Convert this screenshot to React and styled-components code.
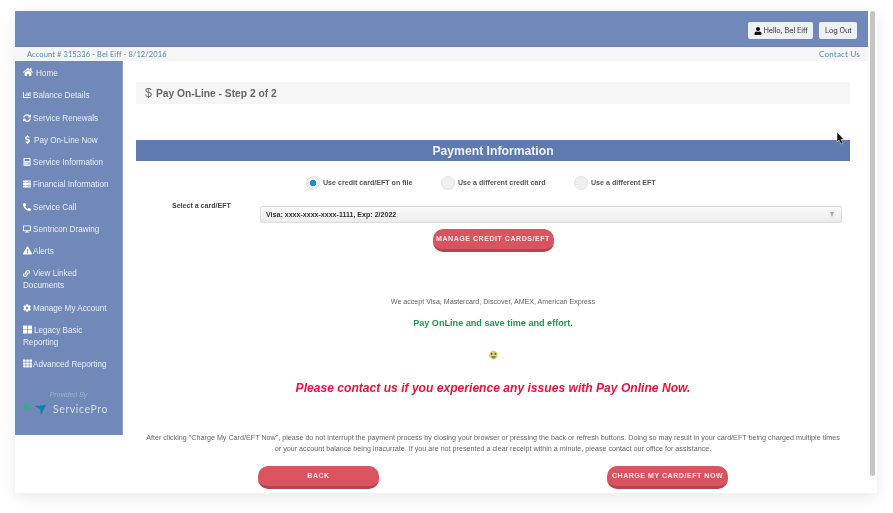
import React from 'react'
import styled, { createGlobalStyle } from 'styled-components'
import {
  FaHome, FaChartBar, FaSyncAlt, FaDollarSign, FaCalculator, FaServer, FaPhoneAlt,
  FaDesktop, FaExclamationTriangle, FaLink, FaCog, FaThLarge, FaTh, FaUser,
} from 'react-icons/fa'

const GlobalStyle = createGlobalStyle`
  html, body {
    margin: 0;
    padding: 0;
    background: #fff;
    font-family: "Liberation Sans", Arial, sans-serif;
    overflow: hidden;
  }
`

const Page = styled.div`
  width: 893px;
  height: 513px;
  padding: 11px 0 0 15px;
  box-sizing: border-box;
  background: #fff;
`
const Window = styled.div`
  position: relative;
  display: flex;
  width: 862px;
  height: 482px;
  background: #fff;
  box-shadow: 0 4px 14px rgba(0, 0, 0, 0.09);
  overflow: hidden;
  filter: blur(0.35px);
`
const Main = styled.div`
  width: 853px;
  display: flex;
  flex-direction: column;
`
const ScrollTrack = styled.div`
  flex: 1;
  padding: 0 2px 0 2px;
`
const ScrollThumb = styled.div`
  height: 465px;
  width: 5px;
  border-radius: 3px;
  background: #c4c4c4;
`
const Header = styled.header`
  height: 36px;
  flex: none;
  box-sizing: border-box;
  background: #7189b8;
  border-bottom: 1px solid #6a82b2;
  display: flex;
  justify-content: flex-end;
  align-items: flex-start;
  gap: 6px;
  padding: 11px 11px 0 0;
`
const HeaderButton = styled.div`
  height: 17px;
  box-sizing: border-box;
  padding: 0 5.5px;
  display: flex;
  align-items: center;
  gap: 2px;
  background: #eef0f6;
  border-radius: 2px;
  color: #333;
  font-size: 7.3px;
  font-family: "Inter", "Liberation Sans", sans-serif;
  letter-spacing: -0.1px;
  white-space: nowrap;
`
const AccountBar = styled.div`
  height: 14px;
  flex: none;
  background: #f5f5f5;
  display: flex;
  justify-content: space-between;
  align-items: center;
  padding: 0 8px 0 12px;
  font-size: 7.5px;
  color: #4f8ea6;
  font-family: "Lato", "Liberation Sans", sans-serif;
  letter-spacing: 0.1px;
`
const ContactLink = styled.span`
  font-size: 8px;
  letter-spacing: 0.2px;
`
const Body = styled.div`
  display: flex;
  align-items: flex-start;
  flex: 1;
`
const Sidebar = styled.nav`
  width: 108px;
  height: 374px;
  flex: none;
  box-sizing: border-box;
  background: #7189b8;
  border-right: 1px solid #8a9ec6;
  padding-top: 1px;
`
const NavItem = styled.div`
  padding: 5px 6px 5.27px 8px;
  font-size: 8.15px;
  line-height: 12px;
  color: #e9edf5;
  svg {
    display: inline-block;
    vertical-align: -1px;
    margin-right: ${(p) => p.$gap || 1}px;
    color: #fff;
  }
`
const Provided = styled.div`
  margin-top: 15px;
  text-align: center;
  font-size: 7px;
  font-style: italic;
  color: #9fb0d2;
`
const LogoRow = styled.div`
  margin-top: 3px;
  padding-left: 7px;
  display: flex;
  align-items: center;
  gap: 7px;
  color: #d5dcec;
  font-family: "Lato", "Liberation Sans", sans-serif;
  font-size: 10.5px;
  letter-spacing: 0.6px;
`
const Content = styled.main`
  flex: 1;
  padding: 21px 18px 0 13px;
`
const TitleBar = styled.div`
  height: 22px;
  background: #f5f5f5;
  display: flex;
  align-items: center;
  padding-left: 9px;
  gap: 4px;
  font-size: 10.25px;
  font-weight: bold;
  color: #666;
`
const DollarMark = styled.span`
  font-size: 12.5px;
  font-weight: normal;
`
const SectionHead = styled.div`
  margin-top: 36px;
  height: 21px;
  background: #5f7aae;
  color: #f1f3f8;
  font-size: 12.2px;
  font-weight: bold;
  line-height: 22px;
  text-align: center;
`
const RadioRow = styled.div`
  margin-top: 15px;
  height: 14px;
  display: flex;
  align-items: center;
  padding-left: 170px;
`
const RadioOption = styled.label`
  display: flex;
  align-items: center;
  gap: 3px;
  width: ${(p) => p.$w}px;
  font-size: 7.1px;
  line-height: 15px;
  font-weight: bold;
  color: #555;
  white-space: nowrap;
`
const RadioDot = styled.span`
  width: 14px;
  height: 14px;
  flex: none;
  box-sizing: border-box;
  border-radius: 50%;
  border: 1px solid #e3e3e3;
  background: ${(p) => (p.$on ? 'radial-gradient(circle, #1f8fc4 0 3px, #eef1f4 3.6px)' : '#f0f0f0')};
`
const SelectRow = styled.div`
  margin-top: 16px;
  display: flex;
  align-items: flex-start;
  padding-right: 8px;
`
const SelectLabel = styled.div`
  width: 124px;
  flex: none;
  box-sizing: border-box;
  padding-left: 36px;
  margin-top: -5px;
  font-size: 7.05px;
  font-weight: bold;
  color: #444;
  line-height: 10px;
`
const SelectBox = styled.div`
  flex: 1;
  height: 17px;
  box-sizing: border-box;
  display: flex;
  justify-content: space-between;
  align-items: center;
  padding: 0 7px 0 5px;
  border: 1px solid #dcdcdc;
  border-radius: 2px;
  background: linear-gradient(#fafafa, #ececec);
  font-size: 7.07px;
  font-weight: bold;
  color: #333;
`
const Caret = styled.span`
  width: 0;
  height: 0;
  border-left: 2.5px solid transparent;
  border-right: 2.5px solid transparent;
  border-top: 5px solid #a8a8a8;
`
const Centered = styled.div`
  display: flex;
  justify-content: center;
  margin-top: ${(p) => p.$top || 0}px;
`
const PillButton = styled.div`
  width: 121px;
  height: 23px;
  box-sizing: border-box;
  display: flex;
  justify-content: center;
  align-items: center;
  padding-bottom: 2px;
  border-radius: 10px;
  background: #d9545e;
  border-bottom: 3px solid #b24650;
  color: #f8e8e8;
  font-size: 7px;
  font-weight: bold;
  letter-spacing: 0.55px;
  white-space: nowrap;
`
const AcceptText = styled.div`
  margin-top: 45px;
  text-align: center;
  font-size: 7.1px;
  line-height: 10px;
  color: #666;
`
const PromoText = styled.div`
  margin-top: 10px;
  text-align: center;
  font-size: 9.1px;
  line-height: 12px;
  font-weight: bold;
  color: #1f9650;
`
const Emoji = styled.svg`
  display: block;
  margin: 21px auto 0;
`
const AlertText = styled.div`
  margin-top: 20px;
  text-align: center;
  font-size: 12.1px;
  line-height: 16px;
  font-weight: bold;
  font-style: italic;
  color: #e3143a;
`
const Notice = styled.div`
  margin-top: 37px;
  text-align: center;
  font-size: 7.18px;
  line-height: 11px;
  color: #666;
  white-space: nowrap;
`
const ActionRow = styled.div`
  margin-top: 11px;
  display: flex;
  padding-left: 122px;
  gap: 228px;
`
const Cursor = styled.svg`
  position: absolute;
  left: 821px;
  top: 121px;
`

const navItems = [
  { icon: FaHome, size: 10, text: 'Home', gap: 3 },
  { icon: FaChartBar, size: 8, text: 'Balance Details', gap: 2 },
  { icon: FaSyncAlt, size: 8, text: 'Service Renewals', gap: 2 },
  { icon: FaDollarSign, size: 9, text: 'Pay On-Line Now', gap: 2 },
  { icon: FaCalculator, size: 8, text: 'Service Information', gap: 2 },
  { icon: FaServer, size: 8, text: 'Financial Information', gap: 2 },
  { icon: FaPhoneAlt, size: 8, text: 'Service Call', gap: 2 },
  { icon: FaDesktop, size: 8, text: 'Sentricon Drawing', gap: 2 },
  { icon: FaExclamationTriangle, size: 9, text: 'Alerts' },
  { icon: FaLink, size: 7, text: 'View Linked Documents', gap: 3 },
  { icon: FaCog, size: 8, text: 'Manage My Account', gap: 2 },
  { icon: FaThLarge, size: 9, text: 'Legacy Basic Reporting', gap: 2 },
  { icon: FaTh, size: 9, text: 'Advanced Reporting' },
]

const Logo = () => (
  <svg width="24" height="15" viewBox="0 0 24 15">
    <path d="M1 9 L5 1 L6 6 L11 9 Z" fill="#2fb56f" />
    <path d="M12 5 L24 4 L19 14 L18 8 Z" fill="#1582ad" />
  </svg>
)

const MoneyFace = () => (
  <Emoji width="9" height="10" viewBox="0 0 9 10">
    <circle cx="4.5" cy="5" r="4.4" fill="#e8d272" />
    <rect x="1.8" y="2.8" width="1.6" height="2" fill="#4f6a3a" />
    <rect x="5.6" y="2.8" width="1.6" height="2" fill="#4f6a3a" />
    <path d="M2 6.2 H7 Q6.5 8.6 4.5 8.6 Q2.5 8.6 2 6.2 Z" fill="#3f9a55" />
  </Emoji>
)

const App = () => (
  <Page>
    <GlobalStyle />
    <Window>
      <Main>
        <Header>
          <HeaderButton>
            <FaUser size={8} color="#111" />
            Hello, Bel Eiff
          </HeaderButton>
          <HeaderButton>Log Out</HeaderButton>
        </Header>
        <AccountBar>
          <span>Account # 315336 - Bel Eiff - 8/12/2016</span>
          <ContactLink>Contact Us</ContactLink>
        </AccountBar>
        <Body>
          <Sidebar>
            {navItems.map((item) => (
              <NavItem key={item.text} $gap={item.gap}>
                <item.icon size={item.size} />
                {item.text}
              </NavItem>
            ))}
            <Provided>Provided By</Provided>
            <LogoRow>
              <Logo />
              ServicePro
            </LogoRow>
          </Sidebar>
          <Content>
            <TitleBar>
              <DollarMark>$</DollarMark>
              Pay On-Line - Step 2 of 2
            </TitleBar>
            <SectionHead>Payment Information</SectionHead>
            <RadioRow>
              <RadioOption $w={135}>
                <RadioDot $on />
                Use credit card/EFT on file
              </RadioOption>
              <RadioOption $w={133}>
                <RadioDot />
                Use a different credit card
              </RadioOption>
              <RadioOption $w={100}>
                <RadioDot />
                Use a different EFT
              </RadioOption>
            </RadioRow>
            <SelectRow>
              <SelectLabel>Select a card/EFT</SelectLabel>
              <SelectBox>
                Visa: xxxx-xxxx-xxxx-1111, Exp: 2/2022
                <Caret />
              </SelectBox>
            </SelectRow>
            <Centered $top={6}>
              <PillButton>MANAGE CREDIT CARDS/EFT</PillButton>
            </Centered>
            <AcceptText>We accept Visa, Mastercard, Discover, AMEX, American Express</AcceptText>
            <PromoText>Pay OnLine and save time and effort.</PromoText>
            <MoneyFace />
            <AlertText>Please contact us if you experience any issues with Pay Online Now.</AlertText>
            <Notice>
              After clicking "Charge My Card/EFT Now", please do not interrupt the payment process by closing your browser or pressing the back or refresh buttons. Doing so may result in your card/EFT being charged multiple times
              <br />
              or your account balance being inacurrate. If you are not presented a clear receipt within a minute, please contact our office for assistance.
            </Notice>
            <ActionRow>
              <PillButton>BACK</PillButton>
              <PillButton>CHARGE MY CARD/EFT NOW</PillButton>
            </ActionRow>
          </Content>
        </Body>
      </Main>
      <ScrollTrack>
        <ScrollThumb />
      </ScrollTrack>
      <Cursor width="9" height="13" viewBox="0 0 9 13">
        <path d="M1 0 V10 L3 8 L5 12 L7 11 L5 7.5 H8 Z" fill="#111" stroke="#fff" strokeWidth="0.5" />
      </Cursor>
    </Window>
  </Page>
)

export default App
